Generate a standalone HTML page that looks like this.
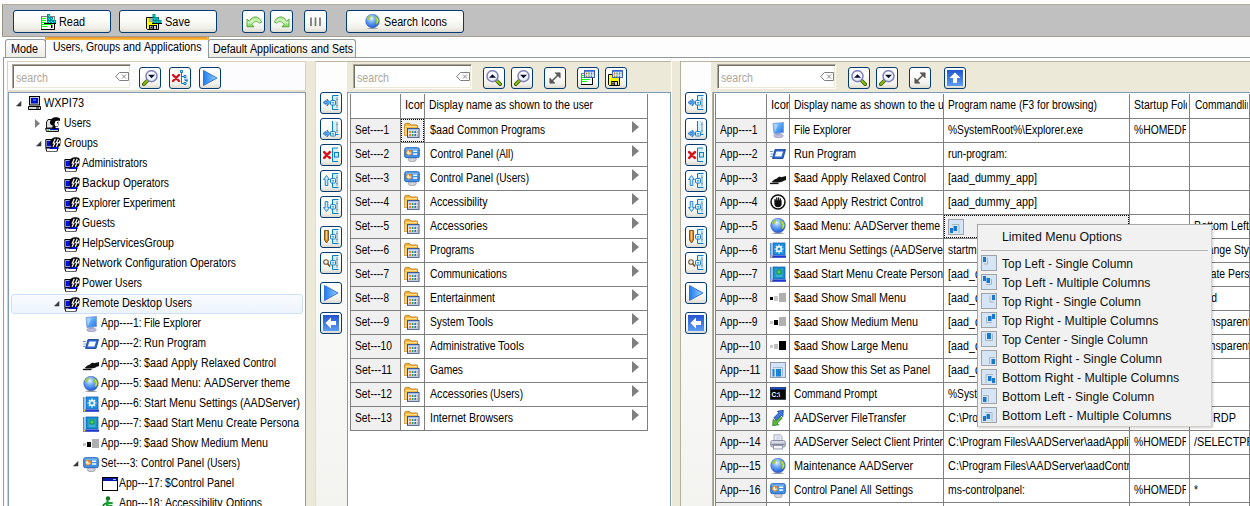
<!DOCTYPE html><html><head><meta charset="utf-8"><title>AADServer</title><style>
html,body{margin:0;padding:0}
body{width:1250px;height:506px;overflow:hidden;background:#fdfdfe;position:relative;font:12px "Liberation Sans",sans-serif;color:#000}
div,span{position:absolute;box-sizing:border-box;white-space:nowrap}
svg{position:absolute;overflow:visible}
.t{line-height:14px;height:14px}
i{display:inline-block;font-style:normal;white-space:pre;transform-origin:0 0;height:14px;vertical-align:top}
.c{height:14px;overflow:hidden}
.btn{border:1px solid #003c74;border-radius:3px;background:linear-gradient(#fff,#fbfbf8 45%,#f1f0ea 80%,#dedad0)}
.inp{background:#fff;border:1px solid;border-color:#aca899 #fff #fff #aca899;box-shadow:inset 1px 1px 0 #716f64,inset -1px -1px 0 #ece9d8}
.ph{color:#aca899}
.hl{background:#808080;height:1px}
.vl{background:#808080;width:1px}
.fc{background:#f0f0f0}
.m{font-size:12px;line-height:15px;height:15px;color:#111;transform-origin:0 0}
</style></head><body>
<svg width="0" height="0" style="position:absolute"><defs>
<linearGradient id="gb" x1="0" y1="0" x2="0" y2="1"><stop offset="0" stop-color="#2455d0"/><stop offset="1" stop-color="#5c9cf4"/></linearGradient>
<linearGradient id="gp" x1="0" y1="0" x2="1" y2="0"><stop offset="0" stop-color="#1c7cf0"/><stop offset="1" stop-color="#9ad0ff"/></linearGradient>
<linearGradient id="gg" x1="0" y1="0" x2="0" y2="1"><stop offset="0" stop-color="#a8e488"/><stop offset=".5" stop-color="#d8f8c4"/><stop offset="1" stop-color="#70cc48"/></linearGradient>
<radialGradient id="gl" cx=".4" cy=".3" r=".8"><stop offset="0" stop-color="#fff"/><stop offset=".6" stop-color="#f0f4fc"/><stop offset="1" stop-color="#c4d0e8"/></radialGradient>
<radialGradient id="ge" cx=".42" cy=".32" r=".75"><stop offset="0" stop-color="#e8f4ff"/><stop offset=".35" stop-color="#78b0f8"/><stop offset=".75" stop-color="#3470e0"/><stop offset="1" stop-color="#2450b8"/></radialGradient><linearGradient id="gm" x1="0" y1="0" x2="1" y2="1"><stop offset="0" stop-color="#b4e0ff"/><stop offset=".45" stop-color="#5cacf8"/><stop offset="1" stop-color="#2c6cdc"/></linearGradient>
<symbol id="read" viewBox="0 0 16 17"><rect x=".5" y="2.5" width="13" height="13" fill="#fff" stroke="#808080"/><path d="M0 15.5H13.5V9" stroke="#000" fill="none"/><path d="M1 4.5H5M1 6.5H5M1 8.5H5M1 10.5H11M1 12.5H6" stroke="#0f0"/><rect x="10" y="11" width="1.5" height="3"/><path d="M6 0h3v3h3v3h3v3H6z" fill="#008c8c"/><path d="M7 1h1v1H7zM7 4h1v1H7zM10 4h1v1h-1zM7 7h1v1H7zM10 7h1v1h-1zM13 7h1v1h-1zM8 2h1v1H8zM8 5h1v1H8zM11 5h1v1h-1zM8 8h1v1H8zM11 8h1v1h-1z" fill="#0ff"/><path d="M3 9.5H15" stroke="#000"/></symbol>
<symbol id="save" viewBox="0 0 16 17"><path d="M.5 3.5H12.5V15.5H1.5L.5 14.5z" fill="#ff0" stroke="#000"/><rect x="3" y="4" width="4" height="4" fill="#b0b0b0"/><rect x="3" y="11" width="8" height="4.5"/><rect x="8" y="12" width="2" height="3" fill="#d0d0d0"/><rect x="4.5" y="12.5" width="2" height="2" fill="none" stroke="#ccc" stroke-width=".6"/><path d="M6.5 0h3v3h3v3h3v3h-9z" fill="#008c8c"/><path d="M7.5 1h1v1h-1zM7.5 4h1v1h-1zM10.5 4h1v1h-1zM7.5 7h1v1h-1zM10.5 7h1v1h-1zM13.5 7h1v1h-1zM8.5 2h1v1h-1zM8.5 5h1v1h-1zM11.5 5h1v1h-1zM8.5 8h1v1h-1zM11.5 8h1v1h-1z" fill="#0ff"/><path d="M6 9.5H16" stroke="#000"/></symbol>
<symbol id="undo" viewBox="0 0 16 16"><path d="M1 5V12.800H8L5.900 10.500C7.800 7.200 11 6.500 13.300 9L15.600 8.100C13.600 2.600 7.200 .3 3.300 7.300z" fill="url(#gg)" stroke="#4ea634" stroke-width=".9" stroke-linejoin="round"/></symbol>
<symbol id="redo" viewBox="0 0 16 16"><path transform="matrix(-1 0 0 1 16 0)" d="M1 5V12.800H8L5.900 10.500C7.800 7.200 11 6.500 13.300 9L15.600 8.100C13.600 2.600 7.200 .3 3.300 7.300z" fill="url(#gg)" stroke="#4ea634" stroke-width=".9" stroke-linejoin="round"/></symbol>
<symbol id="bars" viewBox="0 0 16 16"><path d="M3 3.500V12M7.500 3.500V12M12 3.500V12" stroke="#767676" stroke-width="1.700"/></symbol>
<symbol id="globe" viewBox="0 0 16 16"><ellipse cx="8" cy="15.300" rx="6" ry=".7" fill="#9c9c9c"/><circle cx="8" cy="7.500" r="7.300" fill="url(#ge)" stroke="#3058b0" stroke-width=".5"/><path d="M2 4.500C3 2.500 5 1.500 6.500 1.500C6.500 3 5 4 4.500 6C3.500 7 2.500 6.500 2 4.500z" fill="#a0d040"/><path d="M10.500 2C12.500 2.500 14.500 4.500 14.800 7.500C14 9.500 13 11.500 11.800 11C11.300 9.500 12.500 8 11.500 6.500C10.300 5.500 10 3.500 10.500 2z" fill="#90c838"/><path d="M12.300 4C13.500 5.500 13.800 7.500 13 9.500" stroke="#e8e460" fill="none" stroke-width=".9"/></symbol>
<symbol id="zoomd" viewBox="0 0 16 16"><path d="M6 10L1.800 14.200" stroke="#3c5c00" stroke-width="3.600" stroke-linecap="round"/><path d="M6 10L1.900 14.100" stroke="#88c010" stroke-width="2" stroke-linecap="round"/><circle cx="9.500" cy="6.200" r="5.500" fill="url(#gl)" stroke="#8482bc" stroke-width="1.500"/><path d="M6 4.800H13L9.500 8.300z" fill="#0c0c30"/></symbol>
<symbol id="zoomu" viewBox="0 0 16 16"><path d="M10 10L14.200 14.200" stroke="#3c5c00" stroke-width="3.600" stroke-linecap="round"/><path d="M10 10L14.100 14.100" stroke="#88c010" stroke-width="2" stroke-linecap="round"/><circle cx="6.500" cy="6.200" r="5.500" fill="url(#gl)" stroke="#8482bc" stroke-width="1.500"/><path d="M3 7.800H10L6.500 4.300z" fill="#0c0c30"/></symbol>
<symbol id="expand" viewBox="0 0 16 16"><path d="M4.500 11.500L11.500 4.500" stroke="#585858" stroke-width="1.600"/><path d="M8 2.800H13.200V8zM2.800 8V13.200H8z" fill="#585858" stroke="#585858" stroke-width=".6" stroke-linejoin="round"/></symbol>
<symbol id="play" viewBox="0 0 16 16"><path d="M1.500 .5L15 8L1.500 15.500z" fill="url(#gp)" stroke="#2c6cd8" stroke-width=".9"/></symbol>
<symbol id="up" viewBox="0 0 16 16"><rect width="16" height="16" fill="url(#gb)"/><path d="M8 2.500L13.500 8H10V13H6V8H2.500z" fill="#fff"/></symbol>
<symbol id="left" viewBox="0 0 16 16"><rect width="16" height="16" fill="url(#gb)"/><path d="M2.500 8L8 2.500V6H13V10H8V13.500z" fill="#fff"/></symbol>
<symbol id="clr" viewBox="0 0 14 9"><path d="M.7 4.500L4.500 .5H13.500V8.500H4.500z" fill="none" stroke="#808080"/><path d="M7 2.500L11 6.500M11 2.500L7 6.500" stroke="#808080" stroke-width=".9"/></symbol>
<symbol id="xtree" viewBox="0 0 16 16"><path d="M1 5L7 11M7 5L1 11" stroke="#d8141c" stroke-width="2.400" stroke-linecap="round"/><path d="M9.500 2V13.500H12M9.500 6.500H12" stroke="#0a78c8" fill="none"/><path d="M8.500 .5h2v2h-2zM12 5.500h2v2h-2zM12 12.500h2v2h-2z" fill="#fff" stroke="#0a78c8"/><path d="M13 8.500V10.500H15.500M15 8.500V12" stroke="#0a78c8" fill="none"/></symbol>
<g id="brk"><path d="M10 .5H15.500V14.500H10z" fill="#d4f0fc"/><path d="M15.500 .5H9.500V14.500H15.500" fill="none" stroke="#0a80c4"/><path d="M14 2V13M13 4.500H15M13 10.500H15" stroke="#8c9ca8"/></g>
<g id="sbx"><rect x="7.500" y="5.500" width="5" height="4.500" rx=".8" fill="#d8f2fe" stroke="#1880c8"/><path d="M9 7.800H11" stroke="#1880c8"/></g>
<g id="arr"><path d="M0 7.500L2.500 5.500V6.500H4V4L7 7.500L4 11V8.500H2.500V9.500z" fill="#58a8f0" stroke="#1464c8" stroke-width=".7"/></g>
<symbol id="v1" viewBox="0 0 16 16"><use href="#brk"/><use href="#sbx"/><use href="#arr"/></symbol>
<symbol id="v2" viewBox="0 0 16 16"><use href="#brk" y="-1"/><use href="#sbx" y="5"/><use href="#arr" y="5"/></symbol>
<symbol id="v3" viewBox="0 0 16 16"><path d="M15 1H9.500V14.500H15" fill="#d4f0fc" stroke="#0a80c4"/><rect x="11.500" y="5.500" width="4" height="4.500" fill="#c8ecfc" stroke="#0a80c4"/><path d="M1.200 5.200L6.800 10.800M6.800 5.200L1.200 10.800" stroke="#d8141c" stroke-width="2.600" stroke-linecap="round"/></symbol>
<symbol id="v4" viewBox="0 0 16 16"><use href="#brk"/><use href="#sbx"/><path d="M3.500 2.500L6.500 6.500H4.800V12.500H2.200V6.500H.5z" fill="#c8e8fc" stroke="#1c78d0" stroke-width=".9"/></symbol>
<symbol id="v5" viewBox="0 0 16 16"><use href="#brk"/><use href="#sbx"/><path d="M3.500 12.500L6.500 8.500H4.800V2.500H2.200V8.500H.5z" fill="#c8e8fc" stroke="#1c78d0" stroke-width=".9"/></symbol>
<symbol id="v6" viewBox="0 0 16 16"><use href="#brk"/><use href="#sbx"/><path d="M1.500 1.500H5.500V11L3.500 14L1.500 11z" fill="#d89030" stroke="#784810" stroke-width=".9"/><path d="M3.500 2V10.500" stroke="#f8d080"/></symbol>
<symbol id="v7" viewBox="0 0 16 16"><use href="#brk"/><use href="#sbx"/><circle cx="3" cy="7" r="2.300" fill="#f4f4ff" stroke="#7a5a30" stroke-width="1.100"/><path d="M4.800 8.800L7 11.500" stroke="#7a4a18" stroke-width="1.600"/></symbol>
<g id="blk"><rect x="4.500" y="1.500" width="10" height="7" fill="#e4ecfc" stroke="#3c64b4"/><path d="M5 2H14" stroke="#2c5cd8" stroke-width="1.400"/><path d="M6.500 3.500v2M6.500 6.500v1.500" stroke="#e86820" stroke-width="1.300"/><path d="M9 3.500v2M9 6.500v1.500" stroke="#2ca848" stroke-width="1.300"/><path d="M11.500 3.500v2M11.500 6.500v1.500" stroke="#3478e8" stroke-width="1.300"/><path d="M13.300 3.500v2" stroke="#e8c020" stroke-width="1"/></g>
<symbol id="docprog" viewBox="0 0 16 16"><rect x="1.500" y="3.500" width="11" height="11" fill="#fff" stroke="#808080"/><path d="M1 14.500H12.500V8" stroke="#000" fill="none"/><path d="M2 9.500H10M2 11.500H7M2 7.500H4M2 5.500H4" stroke="#0f0"/><use href="#blk" y="-1"/></symbol>
<symbol id="saveprog" viewBox="0 0 16 16"><path d="M.5 4.500H11.500V15.500H1.500L.5 14.500z" fill="#ff0" stroke="#000"/><rect x="3" y="11" width="7" height="4.500"/><rect x="7" y="12" width="2" height="3" fill="#d0d0d0"/><rect x="4" y="12.500" width="2" height="2" fill="none" stroke="#ccc" stroke-width=".6"/><use href="#blk" y="-1"/></symbol>
<symbol id="fprog" viewBox="0 0 16 16"><path d="M.6 3.200C.6 2 1.200 1.400 2.200 1.400H5.500L7 3H12.500C13.300 3 13.600 3.500 13.600 4.200V13.500H.6z" fill="#f2b53c" stroke="#b47c18" stroke-width=".9"/><path d="M1.300 4.500H12.800" stroke="#fbe08c" stroke-width="1.200"/><path d="M.6 5.500V13.500H3.500V6z" fill="#f8d070"/><rect x="3.500" y="6.500" width="11.500" height="8.800" fill="#e4ecfc" stroke="#3c4c7c"/><path d="M4 7.600H14.500" stroke="#9cc0f0" stroke-width="1.400"/><path d="M6 9v2M6 12v2" stroke="#e8701c" stroke-width="1.700"/><path d="M8.600 9v2M8.600 12v2" stroke="#30a444" stroke-width="1.700"/><path d="M11.200 9v2M11.200 12v2" stroke="#2c6ce4" stroke-width="1.700"/><path d="M13.300 9v2M13.300 12v2" stroke="#e0a818" stroke-width="1.200"/></symbol>
<symbol id="cpl" viewBox="0 0 16 16"><ellipse cx="8.300" cy="13.500" rx="4" ry="2.200" fill="#d4d4d8" stroke="#8c8c98" stroke-width=".7"/><rect x=".7" y="1.700" width="14.600" height="10" rx="1.600" fill="#3f8fe6" stroke="#2a68c0"/><path d="M1.700 3.200H14.300" stroke="#8cc4f8" stroke-width="1.300" opacity=".8"/><circle cx="5" cy="6.600" r="2.500" fill="#fff4d0" stroke="#f08418" stroke-width="1"/><path d="M5 6.600V4.300A2.300 2.300 0 0 1 7.300 6.600z" fill="#f08418"/><path d="M9 5.200H13.200M9 8H13.200" stroke="#fff" stroke-width="1.400"/></symbol>
<symbol id="pc" viewBox="0 0 16 16"><ellipse cx="8.500" cy="13.800" rx="4.800" ry="1.900" fill="#c0c0dc" stroke="#8888b0" stroke-width=".6"/><path d="M6 10H10.500V13.500H6z" fill="#a8a8cc"/><path d="M3 1.500L13.500 .5L13.500 10.500L4 11.500z" fill="url(#gm)" stroke="#7c9ce0" stroke-width=".9" stroke-linejoin="round"/><path d="M4.300 2.800L8 2.400L5 10L4.800 10z" fill="#b8dcff" opacity=".75"/></symbol>
<symbol id="run" viewBox="0 0 16 16"><path d="M0 5.500H3M.5 8H3M0 10.500H2.500" stroke="#6088c8" stroke-width=".9"/><path d="M5 3.500H15.500L13 12.500H2.500z" fill="#2c64d0" stroke="#14388c" stroke-width=".8"/><path d="M6.300 5.500H13L11.500 10.500H4.800z" fill="#f4f8ff"/></symbol>
<symbol id="hand" viewBox="0 0 16 16"><path d="M0 13.500H8.500" stroke="#101010" stroke-width="1.300"/><path d="M1.500 12.300C3 10.300 5 9 7 8.500C8 7 10 6.300 11 7.200L16 6V10C13 11 11 12.500 8 12.500C6 12.600 3.500 12.600 1.500 12.300z" fill="#101010"/></symbol>
<symbol id="stop" viewBox="0 0 16 16"><circle cx="8" cy="8" r="7" fill="#fff" stroke="#101010" stroke-width="1.500"/><path d="M5 8V5.500M6.800 8V4M8.600 8V4M10.400 8V5M5 7H11V10C11 12 9.500 12.500 8 12.500C6 12.500 5 11 5 9.500z" stroke="#101010" stroke-width="1.300" fill="#101010" stroke-linecap="round"/></symbol>
<symbol id="sms" viewBox="0 0 16 16"><path d="M.8 1V13" stroke="#2878e0" stroke-width="1.300"/><rect x="3" y="1" width="12" height="12" fill="#1c90e0" stroke="#1460b8" stroke-width=".8"/><circle cx="9" cy="7" r="3" fill="#fff"/><path d="M9 2.500V11.500M4.500 7H13.500M5.800 3.800L12.200 10.200M12.200 3.800L5.800 10.200" stroke="#fff" stroke-width="1.200"/><circle cx="9" cy="7" r="1.600" fill="#1c90e0"/><rect x="0" y="13.500" width="16" height="2.300" fill="#2038d0"/><rect x=".5" y="13.800" width="1.800" height="1.700" fill="#f8e020"/></symbol>
<symbol id="smc" viewBox="0 0 16 16"><path d="M.8 1V13" stroke="#2878e0" stroke-width="1.300"/><rect x="3" y="1" width="12" height="12" fill="#1890c8" stroke="#1460b8" stroke-width=".8"/><rect x="5.500" y="3" width="7" height="8" fill="#38b0d8"/><rect x="7" y="4" width="4" height="4" fill="#48d860" stroke="#107830" stroke-width=".8"/><rect x="0" y="13.500" width="16" height="2.300" fill="#2038d0"/><rect x=".5" y="13.800" width="1.800" height="1.700" fill="#f8e020"/></symbol>
<symbol id="sz1" viewBox="0 0 16 16"><rect x="0" y="7" width="3" height="3"/><rect x="4" y="6" width="4" height="5" fill="#c8c8c8"/><rect x="9" y="3" width="7" height="9" fill="#b0b0b0"/></symbol>
<symbol id="sz2" viewBox="0 0 16 16"><rect x="0" y="7" width="3" height="3" fill="#c8c8c8"/><rect x="4" y="6" width="4" height="5"/><rect x="9" y="3" width="7" height="9" fill="#b0b0b0"/></symbol>
<symbol id="sz3" viewBox="0 0 16 16"><rect x="0" y="7" width="3" height="3" fill="#c8c8c8"/><rect x="4" y="6" width="4" height="5" fill="#c0c0c0"/><rect x="9" y="3" width="7" height="9"/></symbol>
<symbol id="panel" viewBox="0 0 16 16"><rect x=".5" y=".5" width="15" height="15" fill="#d4e4f8" stroke="#9098a8"/><path d="M3 5.500H12.500V14" stroke="#a8b8d0" fill="none"/><rect x="2.500" y="7" width="2" height="7.500" fill="#1c80d8"/><rect x="6" y="7" width="5" height="7.500" fill="#1c80d8"/></symbol>
<symbol id="cmd" viewBox="0 0 16 16"><rect x=".3" y="1.500" width="15.400" height="12" fill="#080808" stroke="#101838" stroke-width=".6"/><rect x=".5" y="1.500" width="15" height="2" fill="#1c4cc0"/><text x="1.500" y="11" font-family="Liberation Sans,sans-serif" font-weight="bold" font-size="6.500" fill="#fff">C:\</text></symbol>
<symbol id="xfer" viewBox="0 0 16 16"><path transform="translate(1.200 1.200)" d="M1.500 14.500L7.500 13.500L6 12L11 7L8.500 4.500L3.500 9.500L2 8z" fill="#5cbc38" stroke="#2c7818" stroke-width=".8" stroke-linejoin="round"/><path transform="translate(-1.200 -1.200)" d="M14.500 1.500L8.500 2.500L10 4L5 9L7.500 11.500L12.500 6.500L14 8z" fill="#3c7ce0" stroke="#1c3c90" stroke-width=".8" stroke-linejoin="round"/></symbol>
<symbol id="prn" viewBox="0 0 16 16"><path d="M4 .8H10.500L12 2.500V7H4z" fill="#f4f6fc" stroke="#8c94a8" stroke-width=".8"/><path d="M5.500 3H10.500M5.500 5H10.500" stroke="#b0b8d0" stroke-width=".8"/><rect x=".7" y="6.500" width="14.600" height="6.500" rx="1.800" fill="#c4c8d4" stroke="#787c90" stroke-width=".8"/><path d="M1.500 8H14.500" stroke="#e8ecf4"/><path d="M1.500 10.500H14.500" stroke="#8088a0" stroke-width="1.200"/><rect x="3.500" y="11.500" width="9" height="3.500" fill="#f4f4f8" stroke="#8088a0" stroke-width=".8"/></symbol>
<symbol id="comp" viewBox="0 0 16 16"><rect x="1.500" y=".5" width="10" height="8.500" fill="#c8c8c8" stroke="#000"/><rect x="3" y="2" width="7" height="5.500" fill="#0010c8"/><path d="M5 3H8V5H5z" fill="#2860f0"/><path d="M.5 10.500H12.500V13.500H.5z" fill="#d8d8d8" stroke="#000"/><path d="M8 12H11" stroke="#000"/><path d="M2 9.500H11" stroke="#808080"/></symbol>
<symbol id="usr" viewBox="0 -1 16 16"><path d="M3 2.500H8V11H1.500V5z" fill="#e0e0e0" stroke="#000" stroke-width=".9"/><path d="M.5 11.500H13.500V14.500H1.500z" fill="#d0d0d0" stroke="#000" stroke-width=".9"/><rect x="2.500" y="12.500" width="1.500" height="1" fill="#0c0"/><path d="M5 11.500H14V13H5z" fill="#0818c8"/><path d="M5 6C5 2 8 0 12 .3C15 .5 15.500 2.500 15 4L13 3.500L13.800 6.500L13 9.500L10.500 10L11 12H7L8.500 8.500C6.500 8.500 5 7.500 5 6z" fill="#080808"/><path d="M10.500 4L13 3.800L13.600 6.500L12.800 9L10.500 9.500L9.500 7z" fill="#fff"/><rect x="12" y="5" width="1" height="1.500" fill="#0818c8"/></symbol>
<symbol id="grp" viewBox="0 -1 16 16"><path d="M.8 2.500H7.500V10.500H.8z" fill="#d8d8d8" stroke="#000" stroke-width="1"/><rect x="1.800" y="3.800" width="4" height="5.500" fill="#0010e0"/><path d="M.8 11H12.800L12 14.500H1.800z" fill="#fff" stroke="#000" stroke-width="1" stroke-linejoin="round"/><path d="M2 14.800H12" stroke="#909090"/><path d="M4.500 9.800H13.500V12H4.500z" fill="#0010d0"/><path d="M5 6.500C5 3 7 .5 10.500 .3C13 0 16 .3 15.800 3L15.200 8.500L13.500 10H9L7.500 10.800H5.500L6.300 9C5.300 8.500 5 7.500 5 6.500z" fill="#080808"/><path d="M10.300 1.800L8.300 6L9.800 6.300L8 9.800M13.300 1.800L11.500 5.500L13 5.800L11.300 9.800M15 3.500L14 6.500" stroke="#fff" stroke-width="1.200" fill="none"/></symbol>
<symbol id="win" viewBox="0 0 16 16"><rect x=".5" y="1.500" width="15" height="13" fill="#fff" stroke="#000"/><rect x="1" y="2" width="14" height="3" fill="#0818a8"/><path d="M11 3.500H14" stroke="#c0c0c0"/></symbol>
<symbol id="acc" viewBox="0 0 16 16"><circle cx="7" cy="2.500" r="2.200" fill="#107820"/><path d="M6.500 5.500L6 10H10.500L12.500 14.500" stroke="#18a030" stroke-width="2.400" fill="none" stroke-linecap="round" stroke-linejoin="round"/><path d="M6.500 7H11" stroke="#18a030" stroke-width="1.800" stroke-linecap="round"/><path d="M4.500 7.500C1 9 1 14 5.500 15C8 15.300 9.500 14 10 12.500" stroke="#107820" stroke-width="1.800" fill="none" stroke-linecap="round"/></symbol>
<g id="mbg"><rect x=".5" y=".5" width="15" height="15" fill="#d6e5f5" stroke="#a0a4a8"/></g>
<symbol id="mi1" viewBox="0 0 16 16"><use href="#mbg"/><path d="M3 9H6.500V2.500" stroke="#a8b4c4" fill="none"/><rect x="2" y="2" width="3" height="5" fill="#1878d0"/></symbol>
<symbol id="mi2" viewBox="0 0 16 16"><use href="#mbg"/><rect x="2" y="2" width="3" height="5" fill="#1878d0"/><rect x="5.500" y="4" width="3.500" height="5" fill="#1878d0"/><path d="M5 10.500H10.500V5" stroke="#a8b4c4" fill="none"/></symbol>
<symbol id="mi3" viewBox="0 0 16 16"><use href="#mbg"/><path d="M9 2.500V9H13" stroke="#a8b4c4" fill="none"/><rect x="11" y="2" width="3" height="5" fill="#1878d0"/></symbol>
<symbol id="mi4" viewBox="0 0 16 16"><use href="#mbg"/><rect x="11" y="2" width="3" height="5" fill="#1878d0"/><rect x="7" y="4" width="3.500" height="5" fill="#1878d0"/><path d="M5.500 5V10.500H11" stroke="#a8b4c4" fill="none"/></symbol>
<symbol id="mi5" viewBox="0 0 16 16"><use href="#mbg"/><path d="M4.500 2.500V9.500H11.500V2.500" stroke="#a8b4c4" fill="none"/><rect x="6" y="2" width="4" height="6" fill="#1878d0"/></symbol>
<symbol id="mi6" viewBox="0 0 16 16"><use href="#mbg"/><path d="M8.500 14V7.500H14" stroke="#a8b4c4" fill="none"/><rect x="10.500" y="9" width="3.500" height="5" fill="#1878d0"/></symbol>
<symbol id="mi7" viewBox="0 0 16 16"><use href="#mbg"/><path d="M5 14V5.500H12" stroke="#a8b4c4" fill="none"/><rect x="11" y="9" width="3" height="5" fill="#1878d0"/><rect x="7" y="7" width="3.500" height="5" fill="#1878d0"/></symbol>
<symbol id="mi8" viewBox="0 0 16 16"><use href="#mbg"/><path d="M2 7.500H7.500V14" stroke="#a8b4c4" fill="none"/><rect x="2" y="9" width="3.500" height="5" fill="#1878d0"/></symbol>
<symbol id="mi9" viewBox="0 0 16 16"><use href="#mbg"/><path d="M4 5.500H11V14" stroke="#a8b4c4" fill="none"/><rect x="2" y="9" width="3" height="5" fill="#1878d0"/><rect x="5.500" y="7" width="3.500" height="5" fill="#1878d0"/></symbol>
</defs></svg>

<div style="left:2px;top:4px;width:1248px;height:33px;background:#c0c0c0;border-top:1px solid #b4ae9c;border-left:1px solid #9a9684;border-bottom:1px solid #a39f8e"></div>
<div class="btn" style="left:13px;top:10px;width:98px;height:23px;"></div>
<div class="btn" style="left:119px;top:10px;width:98px;height:23px;"></div>
<div class="btn" style="left:242px;top:10px;width:23px;height:23px;"></div>
<div class="btn" style="left:270px;top:10px;width:23px;height:23px;"></div>
<div class="btn" style="left:304px;top:10px;width:23px;height:23px;"></div>
<div class="btn" style="left:346px;top:10px;width:118px;height:23px;"></div>
<svg style="left:41px;top:14px" width="16" height="17"><use href="#read"/></svg>
<span class="t" style="left:59px;top:15px;"><i style="width:26px;transform:scaleX(0.906)">Read</i></span>
<svg style="left:146px;top:14px" width="16" height="17"><use href="#save"/></svg>
<span class="t" style="left:165px;top:15px;"><i style="width:25px;transform:scaleX(0.914)">Save</i></span>
<svg style="left:246px;top:14px" width="16" height="16"><use href="#undo"/></svg>
<svg style="left:274px;top:14px" width="16" height="16"><use href="#redo"/></svg>
<svg style="left:308px;top:14px" width="16" height="16"><use href="#bars"/></svg>
<svg style="left:365px;top:14px" width="15" height="15"><use href="#globe"/></svg>
<span class="t" style="left:383.7px;top:15px;"><i style="width:37px;transform:scaleX(0.895)">Search </i><i style="width:26px;transform:scaleX(0.907)">Icons</i></span>
<div style="left:3px;top:57px;width:1247px;height:1px;background:#919b9c"></div>
<div style="left:3px;top:57px;width:1px;height:449px;background:#919b9c"></div>
<div style="left:5px;top:39px;width:41px;height:18px;border:1px solid #919b9c;border-bottom:0;border-radius:3px 3px 0 0;background:linear-gradient(#fff,#f4f3ee 60%,#ecebe4)"></div>
<div style="left:208px;top:39px;width:148px;height:18px;border:1px solid #919b9c;border-bottom:0;border-radius:3px 3px 0 0;background:linear-gradient(#fff,#f4f3ee 60%,#ecebe4)"></div>
<div style="left:45px;top:37px;width:164px;height:21px;border:1px solid #919b9c;border-bottom:0;border-top:0;background:#fcfcfe"></div>
<div style="left:45px;top:37px;width:164px;height:3px;border-radius:3px 3px 0 0;background:linear-gradient(#e68b2c,#ffc73c)"></div>
<span class="t" style="left:11px;top:42px;"><i style="width:27px;transform:scaleX(0.899)">Mode</i></span>
<span class="t" style="left:53px;top:40px;"><i style="width:33px;transform:scaleX(0.868)">Users, </i><i style="width:37px;transform:scaleX(0.867)">Groups </i><i style="width:21px;transform:scaleX(0.899)">and </i><i style="width:57.5px;transform:scaleX(0.889)">Applications</i></span>
<span class="t" style="left:213.3px;top:42px;"><i style="width:37px;transform:scaleX(0.895)">Default </i><i style="width:60.5px;transform:scaleX(0.889)">Applications </i><i style="width:21px;transform:scaleX(0.899)">and </i><i style="width:21px;transform:scaleX(0.875)">Sets</i></span>
<div style="left:7px;top:61px;width:299px;height:445px;background:#fcfcfe;border:1px solid #d6d2bd;border-bottom:0"></div>
<div style="left:7px;top:90px;width:299px;height:2px;background:#e4e0cc"></div>
<div style="left:8px;top:92px;width:298px;height:420px;background:#fff;border:1px solid #7f9db9"></div>
<div class="inp" style="left:12px;top:64px;width:119px;height:25px;"></div>
<span class="t ph" style="left:16px;top:71px;"><i style="width:32px;transform:scaleX(0.888)">search</i></span>
<svg style="left:115px;top:72px" width="14" height="9"><use href="#clr"/></svg>
<div class="btn" style="left:139px;top:67px;width:22px;height:22px;"></div>
<svg style="left:142px;top:70px" width="16" height="16"><use href="#zoomd"/></svg>
<div class="btn" style="left:169px;top:67px;width:22px;height:22px;"></div>
<svg style="left:172px;top:70px" width="16" height="16"><use href="#xtree"/></svg>
<div class="btn" style="left:199px;top:67px;width:22px;height:22px;"></div>
<svg style="left:202px;top:70px" width="16" height="16"><use href="#play"/></svg>
<div style="left:306px;top:61px;width:9px;height:445px;background:#ece9d8"></div>
<div style="left:315px;top:61px;width:356px;height:445px;background:linear-gradient(#fdfdfe,#fbfbfb 40%,#f3f3f0);border-top:1px solid #b9b5a0;border-left:1px solid #dcdce4"></div>
<div style="left:347px;top:61px;width:324px;height:31px;background:#ece9d8;border-top:1px solid #b9b5a0"></div>
<div style="left:347px;top:92px;width:324px;height:420px;background:#fff;border:1px solid #7f9db9"></div>
<div class="inp" style="left:353px;top:64px;width:119px;height:25px;"></div>
<span class="t ph" style="left:357px;top:71px;"><i style="width:32px;transform:scaleX(0.888)">search</i></span>
<svg style="left:456px;top:72px" width="14" height="9"><use href="#clr"/></svg>
<div class="btn" style="left:483px;top:67px;width:22px;height:22px;"></div>
<svg style="left:486px;top:70px" width="16" height="16"><use href="#zoomu"/></svg>
<div class="btn" style="left:511px;top:67px;width:22px;height:22px;"></div>
<svg style="left:514px;top:70px" width="16" height="16"><use href="#zoomd"/></svg>
<div class="btn" style="left:544px;top:67px;width:22px;height:22px;"></div>
<svg style="left:547px;top:70px" width="16" height="16"><use href="#expand"/></svg>
<div class="btn" style="left:577px;top:67px;width:22px;height:22px;"></div>
<svg style="left:580px;top:70px" width="16" height="16"><use href="#docprog"/></svg>
<div class="btn" style="left:605px;top:67px;width:22px;height:22px;"></div>
<svg style="left:608px;top:70px" width="16" height="16"><use href="#saveprog"/></svg>
<div class="btn" style="left:320px;top:92px;width:22px;height:22px;"></div>
<svg style="left:323px;top:95px" width="16" height="16"><use href="#v1"/></svg>
<div class="btn" style="left:320px;top:118px;width:22px;height:22px;"></div>
<svg style="left:323px;top:121px" width="16" height="16"><use href="#v2"/></svg>
<div class="btn" style="left:320px;top:144px;width:22px;height:22px;"></div>
<svg style="left:323px;top:147px" width="16" height="16"><use href="#v3"/></svg>
<div class="btn" style="left:320px;top:170px;width:22px;height:22px;"></div>
<svg style="left:323px;top:173px" width="16" height="16"><use href="#v4"/></svg>
<div class="btn" style="left:320px;top:196px;width:22px;height:22px;"></div>
<svg style="left:323px;top:199px" width="16" height="16"><use href="#v5"/></svg>
<div class="btn" style="left:320px;top:226px;width:22px;height:22px;"></div>
<svg style="left:323px;top:229px" width="16" height="16"><use href="#v6"/></svg>
<div class="btn" style="left:320px;top:252px;width:22px;height:22px;"></div>
<svg style="left:323px;top:255px" width="16" height="16"><use href="#v7"/></svg>
<div class="btn" style="left:320px;top:282px;width:22px;height:22px;"></div>
<svg style="left:323px;top:285px" width="16" height="16"><use href="#play"/></svg>
<div class="btn" style="left:320px;top:312px;width:22px;height:22px;"></div>
<svg style="left:323px;top:315px" width="16" height="16"><use href="#left"/></svg>
<div class="fc" style="left:351px;top:119px;width:49px;height:311px;"></div>
<div class="vl" style="left:350px;top:94px;width:1px;height:337px;"></div>
<div class="vl" style="left:400px;top:94px;width:1px;height:337px;"></div>
<div class="vl" style="left:424px;top:94px;width:1px;height:337px;"></div>
<div class="vl" style="left:647px;top:94px;width:1px;height:337px;"></div>
<div class="hl" style="left:350px;top:118px;width:298px;height:1px;"></div>
<div class="hl" style="left:350px;top:142px;width:298px;height:1px;"></div>
<div class="hl" style="left:350px;top:166px;width:298px;height:1px;"></div>
<div class="hl" style="left:350px;top:190px;width:298px;height:1px;"></div>
<div class="hl" style="left:350px;top:214px;width:298px;height:1px;"></div>
<div class="hl" style="left:350px;top:238px;width:298px;height:1px;"></div>
<div class="hl" style="left:350px;top:262px;width:298px;height:1px;"></div>
<div class="hl" style="left:350px;top:286px;width:298px;height:1px;"></div>
<div class="hl" style="left:350px;top:310px;width:298px;height:1px;"></div>
<div class="hl" style="left:350px;top:334px;width:298px;height:1px;"></div>
<div class="hl" style="left:350px;top:358px;width:298px;height:1px;"></div>
<div class="hl" style="left:350px;top:382px;width:298px;height:1px;"></div>
<div class="hl" style="left:350px;top:406px;width:298px;height:1px;"></div>
<div class="hl" style="left:350px;top:430px;width:298px;height:1px;"></div>
<span class="t" style="left:405px;top:98px;width:19px;overflow:hidden;"><i style="width:21px;transform:scaleX(0.926)">Icon</i></span>
<span class="t" style="left:428.7px;top:98px;"><i style="width:37px;transform:scaleX(0.867)">Display </i><i style="width:29px;transform:scaleX(0.870)">name </i><i style="width:14px;transform:scaleX(0.875)">as </i><i style="width:34px;transform:scaleX(0.894)">shown </i><i style="width:12px;transform:scaleX(0.899)">to </i><i style="width:18px;transform:scaleX(0.899)">the </i><i style="width:20px;transform:scaleX(0.857)">user</i></span>
<div style="left:401px;top:119px;width:23px;height:23px;background:#f0f0f0;outline:1px dotted #000;outline-offset:-1px"></div>
<span class="t" style="left:355px;top:123px;"><i style="width:34px;transform:scaleX(0.836)">Set----1</i></span>
<span class="t" style="left:429.5px;top:123px;"><i style="width:27px;transform:scaleX(0.899)">$aad </i><i style="width:44px;transform:scaleX(0.846)">Common </i><i style="width:44px;transform:scaleX(0.846)">Programs</i></span>
<svg style="left:404px;top:122px" width="16" height="16"><use href="#fprog"/></svg>
<svg style="left:632px;top:121px" width="7" height="12"><path d="M0 0L7 6L0 12z" fill="#808080"/></svg>
<span class="t" style="left:355px;top:147px;"><i style="width:34px;transform:scaleX(0.836)">Set----2</i></span>
<span class="t" style="left:429.5px;top:147px;"><i style="width:36px;transform:scaleX(0.857)">Control </i><i style="width:30px;transform:scaleX(0.882)">Panel </i><i style="width:17.5px;transform:scaleX(0.820)">(All)</i></span>
<svg style="left:404px;top:146px" width="16" height="16"><use href="#cpl"/></svg>
<svg style="left:632px;top:145px" width="7" height="12"><path d="M0 0L7 6L0 12z" fill="#808080"/></svg>
<span class="t" style="left:355px;top:171px;"><i style="width:34px;transform:scaleX(0.836)">Set----3</i></span>
<span class="t" style="left:429.5px;top:171px;"><i style="width:36px;transform:scaleX(0.857)">Control </i><i style="width:30px;transform:scaleX(0.882)">Panel </i><i style="width:33px;transform:scaleX(0.839)">(Users)</i></span>
<svg style="left:404px;top:170px" width="16" height="16"><use href="#cpl"/></svg>
<svg style="left:632px;top:169px" width="7" height="12"><path d="M0 0L7 6L0 12z" fill="#808080"/></svg>
<span class="t" style="left:355px;top:195px;"><i style="width:34px;transform:scaleX(0.836)">Set----4</i></span>
<span class="t" style="left:429.5px;top:195px;"><i style="width:57.5px;transform:scaleX(0.880)">Accessibility</i></span>
<svg style="left:404px;top:194px" width="16" height="16"><use href="#fprog"/></svg>
<svg style="left:632px;top:193px" width="7" height="12"><path d="M0 0L7 6L0 12z" fill="#808080"/></svg>
<span class="t" style="left:355px;top:219px;"><i style="width:34px;transform:scaleX(0.836)">Set----5</i></span>
<span class="t" style="left:429.5px;top:219px;"><i style="width:57.5px;transform:scaleX(0.889)">Accessories</i></span>
<svg style="left:404px;top:218px" width="16" height="16"><use href="#fprog"/></svg>
<svg style="left:632px;top:217px" width="7" height="12"><path d="M0 0L7 6L0 12z" fill="#808080"/></svg>
<span class="t" style="left:355px;top:243px;"><i style="width:34px;transform:scaleX(0.836)">Set----6</i></span>
<span class="t" style="left:429.5px;top:243px;"><i style="width:44px;transform:scaleX(0.846)">Programs</i></span>
<svg style="left:404px;top:242px" width="16" height="16"><use href="#fprog"/></svg>
<svg style="left:632px;top:241px" width="7" height="12"><path d="M0 0L7 6L0 12z" fill="#808080"/></svg>
<span class="t" style="left:355px;top:267px;"><i style="width:34px;transform:scaleX(0.836)">Set----7</i></span>
<span class="t" style="left:429.5px;top:267px;"><i style="width:77px;transform:scaleX(0.862)">Communications</i></span>
<svg style="left:404px;top:266px" width="16" height="16"><use href="#fprog"/></svg>
<svg style="left:632px;top:265px" width="7" height="12"><path d="M0 0L7 6L0 12z" fill="#808080"/></svg>
<span class="t" style="left:355px;top:291px;"><i style="width:34px;transform:scaleX(0.836)">Set----8</i></span>
<span class="t" style="left:429.5px;top:291px;"><i style="width:65px;transform:scaleX(0.870)">Entertainment</i></span>
<svg style="left:404px;top:290px" width="16" height="16"><use href="#fprog"/></svg>
<svg style="left:632px;top:289px" width="7" height="12"><path d="M0 0L7 6L0 12z" fill="#808080"/></svg>
<span class="t" style="left:355px;top:315px;"><i style="width:34px;transform:scaleX(0.836)">Set----9</i></span>
<span class="t" style="left:429.5px;top:315px;"><i style="width:37px;transform:scaleX(0.854)">System </i><i style="width:26px;transform:scaleX(0.928)">Tools</i></span>
<svg style="left:404px;top:314px" width="16" height="16"><use href="#fprog"/></svg>
<svg style="left:632px;top:313px" width="7" height="12"><path d="M0 0L7 6L0 12z" fill="#808080"/></svg>
<span class="t" style="left:355px;top:339px;"><i style="width:37px;transform:scaleX(0.854)">Set---10</i></span>
<span class="t" style="left:429.5px;top:339px;"><i style="width:68.5px;transform:scaleX(0.870)">Administrative </i><i style="width:26px;transform:scaleX(0.928)">Tools</i></span>
<svg style="left:404px;top:338px" width="16" height="16"><use href="#fprog"/></svg>
<svg style="left:632px;top:337px" width="7" height="12"><path d="M0 0L7 6L0 12z" fill="#808080"/></svg>
<span class="t" style="left:355px;top:363px;"><i style="width:37px;transform:scaleX(0.871)">Set---11</i></span>
<span class="t" style="left:429.5px;top:363px;"><i style="width:33px;transform:scaleX(0.853)">Games</i></span>
<svg style="left:404px;top:362px" width="16" height="16"><use href="#fprog"/></svg>
<svg style="left:632px;top:361px" width="7" height="12"><path d="M0 0L7 6L0 12z" fill="#808080"/></svg>
<span class="t" style="left:355px;top:387px;"><i style="width:37px;transform:scaleX(0.854)">Set---12</i></span>
<span class="t" style="left:429.5px;top:387px;"><i style="width:60.5px;transform:scaleX(0.889)">Accessories </i><i style="width:33px;transform:scaleX(0.839)">(Users)</i></span>
<svg style="left:404px;top:386px" width="16" height="16"><use href="#fprog"/></svg>
<svg style="left:632px;top:385px" width="7" height="12"><path d="M0 0L7 6L0 12z" fill="#808080"/></svg>
<span class="t" style="left:355px;top:411px;"><i style="width:37px;transform:scaleX(0.854)">Set---13</i></span>
<span class="t" style="left:429.5px;top:411px;"><i style="width:39px;transform:scaleX(0.886)">Internet </i><i style="width:44px;transform:scaleX(0.880)">Browsers</i></span>
<svg style="left:404px;top:410px" width="16" height="16"><use href="#fprog"/></svg>
<svg style="left:632px;top:409px" width="7" height="12"><path d="M0 0L7 6L0 12z" fill="#808080"/></svg>
<div style="left:672px;top:61px;width:8px;height:445px;background:#ece9d8"></div>
<div style="left:680px;top:61px;width:570px;height:445px;background:linear-gradient(#fdfdfe,#fbfbfb 40%,#f3f3f0);border-left:1px solid #b4b09c;border-top:1px solid #b9b5a0"></div>
<div style="left:711px;top:61px;width:539px;height:31px;background:#ece9d8;border-top:1px solid #b9b5a0"></div>
<div style="left:712px;top:92px;width:1px;height:414px;background:#b4b09c"></div>
<div style="left:713px;top:92px;width:540px;height:420px;background:#fff;border:1px solid #7f9db9"></div>
<div class="inp" style="left:717px;top:64px;width:119px;height:25px;"></div>
<span class="t ph" style="left:721px;top:71px;"><i style="width:32px;transform:scaleX(0.888)">search</i></span>
<svg style="left:820px;top:72px" width="14" height="9"><use href="#clr"/></svg>
<div class="btn" style="left:848px;top:67px;width:22px;height:22px;"></div>
<svg style="left:851px;top:70px" width="16" height="16"><use href="#zoomu"/></svg>
<div class="btn" style="left:876px;top:67px;width:22px;height:22px;"></div>
<svg style="left:879px;top:70px" width="16" height="16"><use href="#zoomd"/></svg>
<div class="btn" style="left:909px;top:67px;width:22px;height:22px;"></div>
<svg style="left:912px;top:70px" width="16" height="16"><use href="#expand"/></svg>
<div class="btn" style="left:944px;top:67px;width:22px;height:22px;"></div>
<svg style="left:947px;top:70px" width="16" height="16"><use href="#up"/></svg>
<div class="btn" style="left:685px;top:92px;width:22px;height:22px;"></div>
<svg style="left:688px;top:95px" width="16" height="16"><use href="#v1"/></svg>
<div class="btn" style="left:685px;top:118px;width:22px;height:22px;"></div>
<svg style="left:688px;top:121px" width="16" height="16"><use href="#v2"/></svg>
<div class="btn" style="left:685px;top:144px;width:22px;height:22px;"></div>
<svg style="left:688px;top:147px" width="16" height="16"><use href="#v3"/></svg>
<div class="btn" style="left:685px;top:170px;width:22px;height:22px;"></div>
<svg style="left:688px;top:173px" width="16" height="16"><use href="#v4"/></svg>
<div class="btn" style="left:685px;top:196px;width:22px;height:22px;"></div>
<svg style="left:688px;top:199px" width="16" height="16"><use href="#v5"/></svg>
<div class="btn" style="left:685px;top:226px;width:22px;height:22px;"></div>
<svg style="left:688px;top:229px" width="16" height="16"><use href="#v6"/></svg>
<div class="btn" style="left:685px;top:252px;width:22px;height:22px;"></div>
<svg style="left:688px;top:255px" width="16" height="16"><use href="#v7"/></svg>
<div class="btn" style="left:685px;top:282px;width:22px;height:22px;"></div>
<svg style="left:688px;top:285px" width="16" height="16"><use href="#play"/></svg>
<div class="btn" style="left:685px;top:312px;width:22px;height:22px;"></div>
<svg style="left:688px;top:315px" width="16" height="16"><use href="#left"/></svg>
<div class="fc" style="left:716px;top:119px;width:50px;height:387px;"></div>
<div class="vl" style="left:715px;top:94px;width:1px;height:413px;"></div>
<div class="vl" style="left:766px;top:94px;width:1px;height:413px;"></div>
<div class="vl" style="left:789px;top:94px;width:1px;height:413px;"></div>
<div class="vl" style="left:943px;top:94px;width:1px;height:413px;"></div>
<div class="vl" style="left:1129px;top:94px;width:1px;height:413px;"></div>
<div class="vl" style="left:1189px;top:94px;width:1px;height:413px;"></div>
<div class="vl" style="left:1249px;top:94px;width:1px;height:413px;"></div>
<div class="hl" style="left:715px;top:118px;width:535px;height:1px;"></div>
<div class="hl" style="left:715px;top:142px;width:535px;height:1px;"></div>
<div class="hl" style="left:715px;top:166px;width:535px;height:1px;"></div>
<div class="hl" style="left:715px;top:190px;width:535px;height:1px;"></div>
<div class="hl" style="left:715px;top:214px;width:535px;height:1px;"></div>
<div class="hl" style="left:715px;top:238px;width:535px;height:1px;"></div>
<div class="hl" style="left:715px;top:262px;width:535px;height:1px;"></div>
<div class="hl" style="left:715px;top:286px;width:535px;height:1px;"></div>
<div class="hl" style="left:715px;top:310px;width:535px;height:1px;"></div>
<div class="hl" style="left:715px;top:334px;width:535px;height:1px;"></div>
<div class="hl" style="left:715px;top:358px;width:535px;height:1px;"></div>
<div class="hl" style="left:715px;top:382px;width:535px;height:1px;"></div>
<div class="hl" style="left:715px;top:406px;width:535px;height:1px;"></div>
<div class="hl" style="left:715px;top:430px;width:535px;height:1px;"></div>
<div class="hl" style="left:715px;top:454px;width:535px;height:1px;"></div>
<div class="hl" style="left:715px;top:478px;width:535px;height:1px;"></div>
<div class="hl" style="left:715px;top:502px;width:535px;height:1px;"></div>
<span class="t" style="left:771px;top:98px;width:18px;overflow:hidden;"><i style="width:21px;transform:scaleX(0.926)">Icon</i></span>
<span class="t" style="left:794px;top:98px;width:149px;overflow:hidden;"><i style="width:37px;transform:scaleX(0.867)">Display </i><i style="width:29px;transform:scaleX(0.870)">name </i><i style="width:14px;transform:scaleX(0.875)">as </i><i style="width:34px;transform:scaleX(0.894)">shown </i><i style="width:12px;transform:scaleX(0.899)">to </i><i style="width:18px;transform:scaleX(0.899)">the </i><i style="width:20px;transform:scaleX(0.857)">user</i></span>
<span class="t" style="left:948px;top:98px;width:180px;overflow:hidden;"><i style="width:42px;transform:scaleX(0.851)">Program </i><i style="width:29px;transform:scaleX(0.870)">name </i><i style="width:18px;transform:scaleX(0.844)">(F3 </i><i style="width:15px;transform:scaleX(0.865)">for </i><i style="width:45px;transform:scaleX(0.865)">browsing)</i></span>
<span class="t" style="left:1134px;top:98px;width:53px;overflow:hidden;"><i style="width:37px;transform:scaleX(0.880)">Startup </i><i style="width:29px;transform:scaleX(0.853)">Folder</i></span>
<span class="t" style="left:1194.5px;top:98px;width:53px;overflow:hidden;"><i style="width:63px;transform:scaleX(0.851)">Commandline</i></span>
<span class="t" style="left:719.7px;top:123px;"><i style="width:37.5px;transform:scaleX(0.852)">App----1</i></span>
<svg style="left:770px;top:122px" width="16" height="16"><use href="#pc"/></svg>
<span class="t" style="left:794px;top:123px;width:149px;overflow:hidden;"><i style="width:19px;transform:scaleX(0.838)">File </i><i style="width:38px;transform:scaleX(0.850)">Explorer</i></span>
<span class="t" style="left:948.2px;top:123px;width:181px;overflow:hidden;"><i style="width:77px;transform:scaleX(0.855)">%SystemRoot%\</i><i style="width:58px;transform:scaleX(0.870)">Explorer.exe</i></span>
<span class="t" style="left:1134px;top:123px;width:52px;overflow:hidden;"><i style="width:81px;transform:scaleX(0.862)">%HOMEDRIVE%</i></span>
<span class="t" style="left:719.7px;top:147px;"><i style="width:37.5px;transform:scaleX(0.852)">App----2</i></span>
<svg style="left:770px;top:146px" width="16" height="16"><use href="#run"/></svg>
<span class="t" style="left:794px;top:147px;width:149px;overflow:hidden;"><i style="width:23px;transform:scaleX(0.907)">Run </i><i style="width:39px;transform:scaleX(0.848)">Program</i></span>
<span class="t" style="left:948.2px;top:147px;width:181px;overflow:hidden;"><i style="width:59px;transform:scaleX(0.851)">run-program:</i></span>
<span class="t" style="left:719.7px;top:171px;"><i style="width:37.5px;transform:scaleX(0.852)">App----3</i></span>
<svg style="left:770px;top:170px" width="16" height="16"><use href="#hand"/></svg>
<span class="t" style="left:794px;top:171px;width:149px;overflow:hidden;"><i style="width:27px;transform:scaleX(0.899)">$aad </i><i style="width:29.5px;transform:scaleX(0.885)">Apply </i><i style="width:42px;transform:scaleX(0.887)">Relaxed </i><i style="width:33px;transform:scaleX(0.853)">Control</i></span>
<span class="t" style="left:948.2px;top:171px;width:181px;overflow:hidden;"><i style="width:89px;transform:scaleX(0.895)">[aad_dummy_app]</i></span>
<span class="t" style="left:719.7px;top:195px;"><i style="width:37.5px;transform:scaleX(0.852)">App----4</i></span>
<svg style="left:770px;top:194px" width="16" height="16"><use href="#stop"/></svg>
<span class="t" style="left:794px;top:195px;width:149px;overflow:hidden;"><i style="width:27px;transform:scaleX(0.899)">$aad </i><i style="width:29.5px;transform:scaleX(0.885)">Apply </i><i style="width:39px;transform:scaleX(0.886)">Restrict </i><i style="width:33px;transform:scaleX(0.853)">Control</i></span>
<span class="t" style="left:948.2px;top:195px;width:181px;overflow:hidden;"><i style="width:89px;transform:scaleX(0.895)">[aad_dummy_app]</i></span>
<span class="t" style="left:719.7px;top:219px;"><i style="width:37.5px;transform:scaleX(0.852)">App----5</i></span>
<svg style="left:770px;top:218px" width="16" height="16"><use href="#globe"/></svg>
<span class="t" style="left:794px;top:219px;width:149px;overflow:hidden;"><i style="width:27px;transform:scaleX(0.899)">$aad </i><i style="width:33px;transform:scaleX(0.900)">Menu: </i><i style="width:57px;transform:scaleX(0.900)">AADServer </i><i style="width:29px;transform:scaleX(0.870)">theme</i></span>
<span class="t" style="left:1194px;top:219px;width:55px;overflow:hidden;"><i style="width:37px;transform:scaleX(0.895)">Bottom </i><i style="width:18px;transform:scaleX(0.899)">Left</i></span>
<span class="t" style="left:719.7px;top:243px;"><i style="width:37.5px;transform:scaleX(0.852)">App----6</i></span>
<svg style="left:770px;top:242px" width="16" height="16"><use href="#sms"/></svg>
<span class="t" style="left:794px;top:243px;width:149px;overflow:hidden;"><i style="width:25px;transform:scaleX(0.872)">Start </i><i style="width:30px;transform:scaleX(0.900)">Menu </i><i style="width:41px;transform:scaleX(0.878)">Settings </i><i style="width:60px;transform:scaleX(0.882)">(AADServer)</i></span>
<span class="t" style="left:948.2px;top:243px;width:181px;overflow:hidden;"><i style="width:88px;transform:scaleX(0.862)">startmenu-settings:</i></span>
<span class="t" style="left:1194px;top:243px;width:55px;overflow:hidden;"><i style="width:40px;transform:scaleX(0.882)">Change </i><i style="width:23px;transform:scaleX(0.862)">Style</i></span>
<span class="t" style="left:719.7px;top:267px;"><i style="width:37.5px;transform:scaleX(0.852)">App----7</i></span>
<svg style="left:770px;top:266px" width="16" height="16"><use href="#smc"/></svg>
<span class="t" style="left:794px;top:267px;width:149px;overflow:hidden;"><i style="width:27px;transform:scaleX(0.899)">$aad </i><i style="width:25px;transform:scaleX(0.872)">Start </i><i style="width:30px;transform:scaleX(0.900)">Menu </i><i style="width:34px;transform:scaleX(0.864)">Create </i><i style="width:41px;transform:scaleX(0.866)">Personal</i></span>
<span class="t" style="left:948.2px;top:267px;width:181px;overflow:hidden;"><i style="width:89px;transform:scaleX(0.895)">[aad_dummy_app]</i></span>
<span class="t" style="left:1194px;top:267px;width:55px;overflow:hidden;"><i style="width:34px;transform:scaleX(0.864)">Create </i><i style="width:41px;transform:scaleX(0.866)">Personal</i></span>
<span class="t" style="left:719.7px;top:291px;"><i style="width:37.5px;transform:scaleX(0.852)">App----8</i></span>
<svg style="left:770px;top:290px" width="16" height="16"><use href="#sz1"/></svg>
<span class="t" style="left:794px;top:291px;width:149px;overflow:hidden;"><i style="width:27px;transform:scaleX(0.899)">$aad </i><i style="width:30px;transform:scaleX(0.900)">Show </i><i style="width:28px;transform:scaleX(0.840)">Small </i><i style="width:27px;transform:scaleX(0.899)">Menu</i></span>
<span class="t" style="left:948.2px;top:291px;width:181px;overflow:hidden;"><i style="width:89px;transform:scaleX(0.895)">[aad_dummy_app]</i></span>
<span class="t" style="left:1194px;top:291px;width:55px;overflow:hidden;"><i style="width:23px;transform:scaleX(0.862)">Solid</i></span>
<span class="t" style="left:719.7px;top:315px;"><i style="width:37.5px;transform:scaleX(0.852)">App----9</i></span>
<svg style="left:770px;top:314px" width="16" height="16"><use href="#sz2"/></svg>
<span class="t" style="left:794px;top:315px;width:149px;overflow:hidden;"><i style="width:27px;transform:scaleX(0.899)">$aad </i><i style="width:30px;transform:scaleX(0.900)">Show </i><i style="width:40px;transform:scaleX(0.869)">Medium </i><i style="width:27px;transform:scaleX(0.899)">Menu</i></span>
<span class="t" style="left:948.2px;top:315px;width:181px;overflow:hidden;"><i style="width:89px;transform:scaleX(0.895)">[aad_dummy_app]</i></span>
<span class="t" style="left:1194px;top:315px;width:55px;overflow:hidden;"><i style="width:57px;transform:scaleX(0.887)">Transparent</i></span>
<span class="t" style="left:719.7px;top:339px;"><i style="width:40.5px;transform:scaleX(0.867)">App---10</i></span>
<svg style="left:770px;top:338px" width="16" height="16"><use href="#sz3"/></svg>
<span class="t" style="left:794px;top:339px;width:149px;overflow:hidden;"><i style="width:27px;transform:scaleX(0.899)">$aad </i><i style="width:30px;transform:scaleX(0.900)">Show </i><i style="width:30px;transform:scaleX(0.882)">Large </i><i style="width:27px;transform:scaleX(0.899)">Menu</i></span>
<span class="t" style="left:948.2px;top:339px;width:181px;overflow:hidden;"><i style="width:89px;transform:scaleX(0.895)">[aad_dummy_app]</i></span>
<span class="t" style="left:1194px;top:339px;width:55px;overflow:hidden;"><i style="width:57px;transform:scaleX(0.887)">Transparent</i></span>
<span class="t" style="left:719.7px;top:363px;"><i style="width:40.5px;transform:scaleX(0.884)">App---11</i></span>
<svg style="left:770px;top:362px" width="16" height="16"><use href="#panel"/></svg>
<span class="t" style="left:794px;top:363px;width:149px;overflow:hidden;"><i style="width:27px;transform:scaleX(0.899)">$aad </i><i style="width:30px;transform:scaleX(0.900)">Show </i><i style="width:19px;transform:scaleX(0.863)">this </i><i style="width:19px;transform:scaleX(0.890)">Set </i><i style="width:14px;transform:scaleX(0.875)">as </i><i style="width:27px;transform:scaleX(0.880)">Panel</i></span>
<span class="t" style="left:948.2px;top:363px;width:181px;overflow:hidden;"><i style="width:89px;transform:scaleX(0.895)">[aad_dummy_app]</i></span>
<span class="t" style="left:719.7px;top:387px;"><i style="width:40.5px;transform:scaleX(0.867)">App---12</i></span>
<svg style="left:770px;top:386px" width="16" height="16"><use href="#cmd"/></svg>
<span class="t" style="left:794px;top:387px;width:149px;overflow:hidden;"><i style="width:50px;transform:scaleX(0.852)">Command </i><i style="width:33px;transform:scaleX(0.853)">Prompt</i></span>
<span class="t" style="left:948.2px;top:387px;width:181px;overflow:hidden;"><i style="width:77px;transform:scaleX(0.855)">%SystemRoot%\</i><i style="width:48px;transform:scaleX(0.878)">system32\</i><i style="width:40px;transform:scaleX(0.882)">cmd.exe</i></span>
<span class="t" style="left:719.7px;top:411px;"><i style="width:40.5px;transform:scaleX(0.867)">App---13</i></span>
<svg style="left:770px;top:410px" width="16" height="16"><use href="#xfer"/></svg>
<span class="t" style="left:794px;top:411px;width:149px;overflow:hidden;"><i style="width:57px;transform:scaleX(0.900)">AADServer </i><i style="width:55px;transform:scaleX(0.865)">FileTransfer</i></span>
<span class="t" style="left:948.2px;top:411px;width:181px;overflow:hidden;"><i style="width:14px;transform:scaleX(0.913)">C:\</i><i style="width:42px;transform:scaleX(0.851)">Program </i><i style="width:25px;transform:scaleX(0.872)">Files\</i><i style="width:58px;transform:scaleX(0.915)">AADServer\</i><i style="width:93px;transform:scaleX(0.881)">aadFileTransfer.exe</i></span>
<span class="t" style="left:1212.5px;top:411px;width:55px;overflow:hidden;"><i style="width:23px;transform:scaleX(0.908)">RDP</i></span>
<span class="t" style="left:719.7px;top:435px;"><i style="width:40.5px;transform:scaleX(0.867)">App---14</i></span>
<svg style="left:770px;top:434px" width="16" height="16"><use href="#prn"/></svg>
<span class="t" style="left:794px;top:435px;width:149px;overflow:hidden;"><i style="width:57px;transform:scaleX(0.900)">AADServer </i><i style="width:33px;transform:scaleX(0.900)">Select </i><i style="width:29px;transform:scaleX(0.853)">Client </i><i style="width:30px;transform:scaleX(0.849)">Printer</i></span>
<span class="t" style="left:948.2px;top:435px;width:181px;overflow:hidden;"><i style="width:14px;transform:scaleX(0.913)">C:\</i><i style="width:42px;transform:scaleX(0.851)">Program </i><i style="width:25px;transform:scaleX(0.872)">Files\</i><i style="width:58px;transform:scaleX(0.915)">AADServer\</i><i style="width:90.5px;transform:scaleX(0.892)">aadApplication.exe</i></span>
<span class="t" style="left:1134px;top:435px;width:52px;overflow:hidden;"><i style="width:81px;transform:scaleX(0.862)">%HOMEDRIVE%</i></span>
<span class="t" style="left:1194px;top:435px;width:55px;overflow:hidden;"><i style="width:93px;transform:scaleX(0.906)">/SELECTPRINTER</i></span>
<span class="t" style="left:719.7px;top:459px;"><i style="width:40.5px;transform:scaleX(0.867)">App---15</i></span>
<svg style="left:770px;top:458px" width="16" height="16"><use href="#globe"/></svg>
<span class="t" style="left:794px;top:459px;width:149px;overflow:hidden;"><i style="width:65px;transform:scaleX(0.902)">Maintenance </i><i style="width:54px;transform:scaleX(0.900)">AADServer</i></span>
<span class="t" style="left:948.2px;top:459px;width:181px;overflow:hidden;"><i style="width:14px;transform:scaleX(0.913)">C:\</i><i style="width:42px;transform:scaleX(0.851)">Program </i><i style="width:25px;transform:scaleX(0.872)">Files\</i><i style="width:58px;transform:scaleX(0.915)">AADServer\</i><i style="width:71px;transform:scaleX(0.872)">aadControl.exe</i></span>
<span class="t" style="left:719.7px;top:483px;"><i style="width:40.5px;transform:scaleX(0.867)">App---16</i></span>
<svg style="left:770px;top:482px" width="16" height="16"><use href="#cpl"/></svg>
<span class="t" style="left:794px;top:483px;width:149px;overflow:hidden;"><i style="width:36px;transform:scaleX(0.857)">Control </i><i style="width:30px;transform:scaleX(0.882)">Panel </i><i style="width:14.5px;transform:scaleX(0.870)">All </i><i style="width:38px;transform:scaleX(0.876)">Settings</i></span>
<span class="t" style="left:948.2px;top:483px;width:181px;overflow:hidden;"><i style="width:77px;transform:scaleX(0.868)">ms-controlpanel:</i></span>
<span class="t" style="left:1134px;top:483px;width:52px;overflow:hidden;"><i style="width:81px;transform:scaleX(0.862)">%HOMEDRIVE%</i></span>
<span class="t" style="left:1194px;top:483px;width:55px;overflow:hidden;"><i style="width:4px;transform:scaleX(0.856)">*</i></span>
<div style="left:944px;top:215px;width:185px;height:23px;background:#f0f0f0;outline:1px dotted #000;outline-offset:-1px"></div>
<svg style="left:948px;top:219px" width="16" height="16"><use href="#mi9"/></svg>
<div style="left:11px;top:294px;width:292px;height:20px;background:linear-gradient(#f8fbfe,#eef4fc);border:1px solid #cfdff5;border-radius:3px"></div>
<span class="t" style="left:43.5px;top:96px;"><i style="width:40px;transform:scaleX(0.909)">WXPI73</i></span>
<svg style="left:28px;top:96px" width="16" height="16"><use href="#comp"/></svg>
<svg style="left:16px;top:101px" width="6" height="6"><path d="M5 .5V5H.5z" fill="#383838" stroke="#383838" stroke-width=".6" stroke-linejoin="round"/></svg>
<span class="t" style="left:63.5px;top:116px;"><i style="width:27px;transform:scaleX(0.862)">Users</i></span>
<svg style="left:45px;top:116px" width="16" height="16"><use href="#usr"/></svg>
<svg style="left:35px;top:119px" width="5" height="9"><path d="M0 0L5 4.5L0 9z" fill="#808080"/></svg>
<span class="t" style="left:63.5px;top:136px;"><i style="width:34px;transform:scaleX(0.864)">Groups</i></span>
<svg style="left:45px;top:136px" width="16" height="16"><use href="#grp"/></svg>
<svg style="left:36px;top:141px" width="6" height="6"><path d="M5 .5V5H.5z" fill="#383838" stroke="#383838" stroke-width=".6" stroke-linejoin="round"/></svg>
<span class="t" style="left:81.5px;top:156px;"><i style="width:65.5px;transform:scaleX(0.854)">Administrators</i></span>
<svg style="left:64px;top:156px" width="16" height="16"><use href="#grp"/></svg>
<span class="t" style="left:81.5px;top:176px;"><i style="width:41px;transform:scaleX(0.946)">Backup </i><i style="width:46px;transform:scaleX(0.862)">Operators</i></span>
<svg style="left:64px;top:176px" width="16" height="16"><use href="#grp"/></svg>
<span class="t" style="left:81.5px;top:196px;"><i style="width:41px;transform:scaleX(0.854)">Explorer </i><i style="width:52px;transform:scaleX(0.857)">Experiment</i></span>
<svg style="left:64px;top:196px" width="16" height="16"><use href="#grp"/></svg>
<span class="t" style="left:81.5px;top:216px;"><i style="width:33px;transform:scaleX(0.868)">Guests</i></span>
<svg style="left:64px;top:216px" width="16" height="16"><use href="#grp"/></svg>
<span class="t" style="left:81.5px;top:236px;"><i style="width:92px;transform:scaleX(0.884)">HelpServicesGroup</i></span>
<svg style="left:64px;top:236px" width="16" height="16"><use href="#grp"/></svg>
<span class="t" style="left:81.5px;top:256px;"><i style="width:43px;transform:scaleX(0.908)">Network </i><i style="width:65px;transform:scaleX(0.870)">Configuration </i><i style="width:46px;transform:scaleX(0.862)">Operators</i></span>
<svg style="left:64px;top:256px" width="16" height="16"><use href="#grp"/></svg>
<span class="t" style="left:81.5px;top:276px;"><i style="width:33px;transform:scaleX(0.884)">Power </i><i style="width:27px;transform:scaleX(0.862)">Users</i></span>
<svg style="left:64px;top:276px" width="16" height="16"><use href="#grp"/></svg>
<span class="t" style="left:81.5px;top:296px;"><i style="width:40px;transform:scaleX(0.882)">Remote </i><i style="width:43px;transform:scaleX(0.908)">Desktop </i><i style="width:27px;transform:scaleX(0.862)">Users</i></span>
<svg style="left:64px;top:296px" width="16" height="16"><use href="#grp"/></svg>
<svg style="left:54px;top:301px" width="6" height="6"><path d="M5 .5V5H.5z" fill="#383838" stroke="#383838" stroke-width=".6" stroke-linejoin="round"/></svg>
<span class="t" style="left:100.5px;top:316px;"><i style="width:43.5px;transform:scaleX(0.858)">App----1: </i><i style="width:19px;transform:scaleX(0.838)">File </i><i style="width:38px;transform:scaleX(0.850)">Explorer</i></span>
<svg style="left:83px;top:316px" width="16" height="16"><use href="#pc"/></svg>
<span class="t" style="left:100.5px;top:336px;"><i style="width:43.5px;transform:scaleX(0.858)">App----2: </i><i style="width:23px;transform:scaleX(0.907)">Run </i><i style="width:39px;transform:scaleX(0.848)">Program</i></span>
<svg style="left:83px;top:336px" width="16" height="16"><use href="#run"/></svg>
<span class="t" style="left:100.5px;top:356px;"><i style="width:43.5px;transform:scaleX(0.858)">App----3: </i><i style="width:27px;transform:scaleX(0.899)">$aad </i><i style="width:29.5px;transform:scaleX(0.885)">Apply </i><i style="width:42px;transform:scaleX(0.887)">Relaxed </i><i style="width:33px;transform:scaleX(0.853)">Control</i></span>
<svg style="left:83px;top:356px" width="16" height="16"><use href="#hand"/></svg>
<span class="t" style="left:100.5px;top:376px;"><i style="width:43.5px;transform:scaleX(0.858)">App----5: </i><i style="width:27px;transform:scaleX(0.899)">$aad </i><i style="width:33px;transform:scaleX(0.900)">Menu: </i><i style="width:57px;transform:scaleX(0.900)">AADServer </i><i style="width:29px;transform:scaleX(0.870)">theme</i></span>
<svg style="left:83px;top:376px" width="16" height="16"><use href="#globe"/></svg>
<span class="t" style="left:100.5px;top:396px;"><i style="width:43.5px;transform:scaleX(0.858)">App----6: </i><i style="width:25px;transform:scaleX(0.872)">Start </i><i style="width:30px;transform:scaleX(0.900)">Menu </i><i style="width:41px;transform:scaleX(0.878)">Settings </i><i style="width:60px;transform:scaleX(0.882)">(AADServer)</i></span>
<svg style="left:83px;top:396px" width="16" height="16"><use href="#sms"/></svg>
<span class="t" style="left:100.5px;top:416px;"><i style="width:43.5px;transform:scaleX(0.858)">App----7: </i><i style="width:27px;transform:scaleX(0.899)">$aad </i><i style="width:25px;transform:scaleX(0.872)">Start </i><i style="width:30px;transform:scaleX(0.900)">Menu </i><i style="width:34px;transform:scaleX(0.864)">Create </i><i style="width:39px;transform:scaleX(0.873)">Persona</i></span>
<svg style="left:83px;top:416px" width="16" height="16"><use href="#smc"/></svg>
<span class="t" style="left:100.5px;top:436px;"><i style="width:43.5px;transform:scaleX(0.858)">App----9: </i><i style="width:27px;transform:scaleX(0.899)">$aad </i><i style="width:30px;transform:scaleX(0.900)">Show </i><i style="width:40px;transform:scaleX(0.869)">Medium </i><i style="width:27px;transform:scaleX(0.899)">Menu</i></span>
<svg style="left:83px;top:436px" width="16" height="16"><use href="#sz2"/></svg>
<span class="t" style="left:100.5px;top:456px;"><i style="width:40px;transform:scaleX(0.845)">Set----3: </i><i style="width:36px;transform:scaleX(0.857)">Control </i><i style="width:30px;transform:scaleX(0.882)">Panel </i><i style="width:33px;transform:scaleX(0.839)">(Users)</i></span>
<svg style="left:83px;top:456px" width="16" height="16"><use href="#cpl"/></svg>
<svg style="left:73px;top:461px" width="6" height="6"><path d="M5 .5V5H.5z" fill="#383838" stroke="#383838" stroke-width=".6" stroke-linejoin="round"/></svg>
<span class="t" style="left:118.5px;top:476px;"><i style="width:46.5px;transform:scaleX(0.871)">App---17: </i><i style="width:42px;transform:scaleX(0.863)">$Control </i><i style="width:27px;transform:scaleX(0.880)">Panel</i></span>
<svg style="left:102px;top:476px" width="16" height="16"><use href="#win"/></svg>
<span class="t" style="left:118.5px;top:496px;"><i style="width:46.5px;transform:scaleX(0.871)">App---18: </i><i style="width:60.5px;transform:scaleX(0.881)">Accessibility </i><i style="width:36px;transform:scaleX(0.871)">Options</i></span>
<svg style="left:101px;top:496px" width="16" height="16"><use href="#acc"/></svg>
<div style="left:977px;top:224px;width:235px;height:203px;background:#f1f1f1;border:1px solid #a7a7a7;border-right-color:#d4d0c8;border-bottom-color:#d4d0c8;box-shadow:1px 1px 2px rgba(0,0,0,.2)"></div>
<div style="left:981px;top:250px;width:227px;height:1px;background:#b4b4b4"></div>
<span class="m" style="left:1001.5px;top:230px;transform:scaleX(1.028)">Limited Menu Options</span>
<span class="m" style="left:1002px;top:257px;transform:scaleX(0.997)">Top Left - Single Column</span>
<svg style="left:981px;top:255px" width="16" height="16"><use href="#mi1"/></svg>
<span class="m" style="left:1002px;top:276px;transform:scaleX(1.020)">Top Left - Multiple Columns</span>
<svg style="left:981px;top:274px" width="16" height="16"><use href="#mi2"/></svg>
<span class="m" style="left:1002px;top:295px;transform:scaleX(0.997)">Top Right - Single Column</span>
<svg style="left:981px;top:293px" width="16" height="16"><use href="#mi3"/></svg>
<span class="m" style="left:1002px;top:314px;transform:scaleX(1.019)">Top Right - Multiple Columns</span>
<svg style="left:981px;top:312px" width="16" height="16"><use href="#mi4"/></svg>
<span class="m" style="left:1002px;top:333px;transform:scaleX(0.990)">Top Center - Single Column</span>
<svg style="left:981px;top:331px" width="16" height="16"><use href="#mi5"/></svg>
<span class="m" style="left:1002px;top:352px;transform:scaleX(1.012)">Bottom Right - Single Column</span>
<svg style="left:981px;top:350px" width="16" height="16"><use href="#mi6"/></svg>
<span class="m" style="left:1002px;top:371px;transform:scaleX(1.030)">Bottom Right - Multiple Columns</span>
<svg style="left:981px;top:369px" width="16" height="16"><use href="#mi7"/></svg>
<span class="m" style="left:1002px;top:390px;transform:scaleX(1.014)">Bottom Left - Single Column</span>
<svg style="left:981px;top:388px" width="16" height="16"><use href="#mi8"/></svg>
<span class="m" style="left:1002px;top:409px;transform:scaleX(1.033)">Bottom Left - Multiple Columns</span>
<svg style="left:981px;top:407px" width="16" height="16"><use href="#mi9"/></svg>
</body></html>
